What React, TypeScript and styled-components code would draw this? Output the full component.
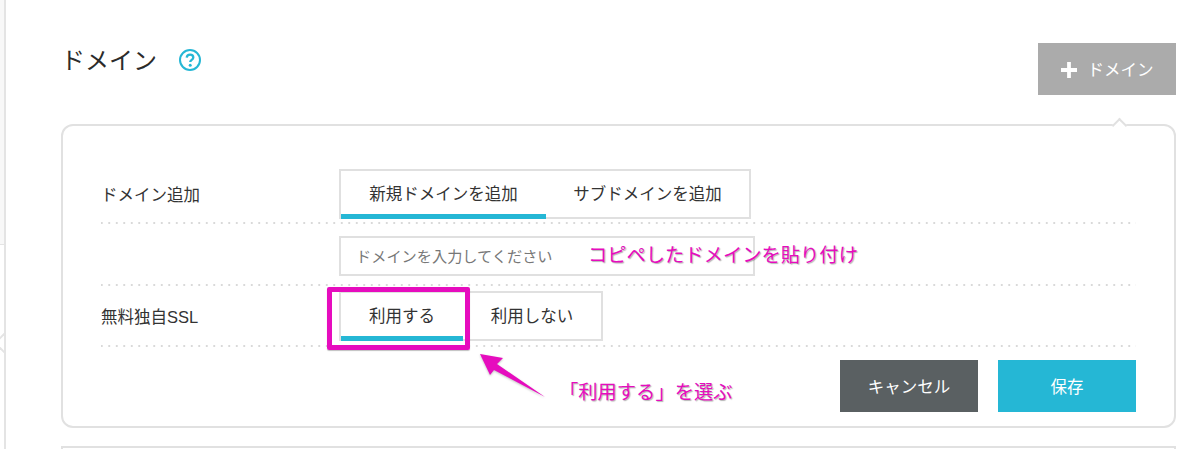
import styled, { createGlobalStyle } from 'styled-components';

const GlobalStyle = createGlobalStyle`
  html, body {
    margin: 0;
    padding: 0;
    background: #fff;
  }
  body {
    font-family: "Liberation Sans", "Noto Sans CJK JP", sans-serif;
    color: #333;
  }
`;

const Page = styled.div`
  position: relative;
  width: 1200px;
  height: 449px;
  overflow: hidden;
  box-sizing: border-box;
  padding: 43px 24px 0 61px;
`;

const SideEdge = styled.div`
  position: absolute;
  left: 0;
  top: 0;
  box-sizing: border-box;
  width: 6px;
  height: 449px;
  overflow: hidden;
  border-right: 2px solid #e4e4e4;

  &::after {
    content: '';
    position: absolute;
    left: -3px;
    top: 335px;
    box-sizing: border-box;
    width: 16px;
    height: 16px;
    background: #fff;
    border-left: 2px solid #e4e4e4;
    border-bottom: 2px solid #e4e4e4;
    transform: rotate(45deg);
  }
`;

const SideItem = styled.div`
  height: 245px;
  box-sizing: border-box;
  background: #f8f8f8;
  border-bottom: 1px solid #e4e4e4;
`;

const Header = styled.div`
  display: flex;
  justify-content: space-between;
  align-items: flex-start;
  height: 81px;
`;

const TitleGroup = styled.div`
  display: flex;
  align-items: center;
  gap: 21px;
  height: 34px;
`;

const Title = styled.h1`
  margin: 2px 0 0;
  font-size: 24px;
  line-height: 34px;
  font-weight: 400;
  color: #2b2b2b;
`;

const HelpIcon = styled.svg`
  width: 24px;
  height: 24px;
  display: block;
`;

const AddButton = styled.button`
  display: flex;
  align-items: center;
  justify-content: center;
  gap: 11px;
  width: 138px;
  height: 52px;
  padding: 0;
  border: 0;
  background: #ababab;
  color: #fff;
  font-family: inherit;
  font-size: 16.5px;
`;

const PlusIcon = styled.svg`
  width: 16px;
  height: 16px;
  margin-top: 2px;
  display: block;
`;

const Panel = styled.section`
  position: relative;
  box-sizing: border-box;
  width: 1115px;
  height: 304px;
  border: 2px solid #e1e1e1;
  border-radius: 12px;
  padding: 36px 38px 0 38px;

  &::before {
    content: '';
    position: absolute;
    top: -6px;
    right: 49px;
    width: 9px;
    height: 9px;
    background: #fff;
    border-top: 2px solid #e1e1e1;
    border-left: 2px solid #e1e1e1;
    transform: rotate(45deg);
  }
`;

const Row = styled.div<{ $height: number; $lift?: boolean }>`
  display: flex;
  align-items: center;
  box-sizing: border-box;
  height: ${({ $height }) => $height}px;
  padding: ${({ $lift }) => ($lift ? '0 0 1px' : '2px 0 0')};
  background-image: radial-gradient(circle, #d9d9d9 1px, transparent 1.1px);
  background-size: 7.5px 2px;
  background-repeat: repeat-x;
  background-position: -3px bottom;
`;

const Label = styled.div`
  width: 238px;
  flex: none;
  margin-top: -1px;
  font-size: 16.5px;
  color: #333;
`;

const TabGroup = styled.div`
  display: flex;
  box-sizing: border-box;
  height: 50px;
  border: 2px solid #e0e0e0;
`;

const Tab = styled.div<{ $active?: boolean; $width: number }>`
  box-sizing: border-box;
  width: ${({ $width }) => $width}px;
  height: 48px;
  padding-top: 2px;
  font-size: 16.5px;
  line-height: 43px;
  text-align: center;
  color: #333;
  border-bottom: 5px solid ${({ $active }) => ($active ? '#25b7d5' : 'transparent')};
`;

const DomainInput = styled.input`
  box-sizing: border-box;
  width: 416px;
  height: 40px;
  padding: 0 15px;
  border: 2px solid #e0e0e0;
  outline: none;
  font-family: inherit;
  font-size: 15.2px;
  background: transparent;

  &::placeholder {
    color: #777;
    opacity: 1;
  }
`;

const Footer = styled.div`
  display: flex;
  justify-content: flex-end;
  gap: 20px;
  padding: 13px 0 0;
`;

const ActionButton = styled.button<{ $primary?: boolean }>`
  width: 138px;
  height: 52px;
  padding: 0;
  border: 0;
  background: ${({ $primary }) => ($primary ? '#25b7d5' : '#5a6062')};
  color: #fff;
  font-family: inherit;
  font-size: 16.5px;
`;

const Note = styled.div<{ $left: number; $top: number }>`
  position: absolute;
  left: ${({ $left }) => $left}px;
  top: ${({ $top }) => $top}px;
  font-size: 19.3px;
  line-height: 20px;
  white-space: nowrap;
  color: #e60cbe;
  text-shadow: 1px 1px 1px rgba(0, 0, 0, 0.3), -1px -1px 0 #fff, 1px -1px 0 #fff, -1px 1px 0 #fff;
`;

const Highlight = styled.div`
  position: absolute;
  left: 327px;
  top: 287px;
  box-sizing: border-box;
  width: 143px;
  height: 63px;
  border: 5px solid #e60cbe;
  border-radius: 2px;
  box-shadow: 0 1px 1px rgba(0, 0, 0, 0.25);
`;

const Arrow = styled.svg`
  position: absolute;
  left: 476px;
  top: 350px;
  width: 74px;
  height: 54px;
  filter: drop-shadow(0 1px 1px rgba(0, 0, 0, 0.25));
`;

const NextPanel = styled.div`
  position: absolute;
  left: 61px;
  top: 446px;
  width: 1115px;
  height: 10px;
  box-sizing: border-box;
  border: 2px solid #e1e1e1;
`;

export default function App() {
  return (
    <>
      <GlobalStyle />
      <Page>
        <SideEdge>
          <SideItem />
        </SideEdge>

        <Header>
          <TitleGroup>
            <Title>ドメイン</Title>
            <HelpIcon viewBox="0 0 24 24" aria-hidden="true">
              <circle cx="12" cy="12" r="10" fill="none" stroke="#25b7d5" strokeWidth="2" />
              <path
                d="M8.7 9.6c.2-1.9 1.5-2.9 3.4-2.9 1.9 0 3.2 1.1 3.2 2.7 0 2.4-3.1 2.4-3.1 4.6"
                fill="none"
                stroke="#25b7d5"
                strokeWidth="2.3"
              />
              <circle cx="12.2" cy="17.2" r="1.5" fill="#25b7d5" />
            </HelpIcon>
          </TitleGroup>
          <AddButton>
            <PlusIcon viewBox="0 0 17 17" aria-hidden="true">
              <path d="M6.5 0h4v6.5H17v4h-6.5V17h-4v-6.5H0v-4h6.5z" fill="#fff" />
            </PlusIcon>
            ドメイン
          </AddButton>
        </Header>

        <Panel>
          <Row $height={62}>
            <Label>ドメイン追加</Label>
            <TabGroup>
              <Tab $active $width={205}>新規ドメインを追加</Tab>
              <Tab $width={203}>サブドメインを追加</Tab>
            </TabGroup>
          </Row>
          <Row $height={62}>
            <Label />
            <DomainInput placeholder="ドメインを入力してください" />
          </Row>
          <Row $height={61} $lift>
            <Label>無料独自SSL</Label>
            <TabGroup>
              <Tab $active $width={122}>利用する</Tab>
              <Tab $width={138}>利用しない</Tab>
            </TabGroup>
          </Row>
          <Footer>
            <ActionButton>キャンセル</ActionButton>
            <ActionButton $primary>保存</ActionButton>
          </Footer>
        </Panel>

        <NextPanel />
        <Highlight />
        <Arrow viewBox="0 0 74 54" aria-hidden="true">
          <path d="M4 4 L27 8 L21 14 L69 47 L18 20 L14 25 Z" fill="#e60cbe" />
        </Arrow>
        <Note $left={588} $top={246}>コピペしたドメインを貼り付け</Note>
        <Note $left={559} $top={383}>「利用する」を選ぶ</Note>
      </Page>
    </>
  );
}
